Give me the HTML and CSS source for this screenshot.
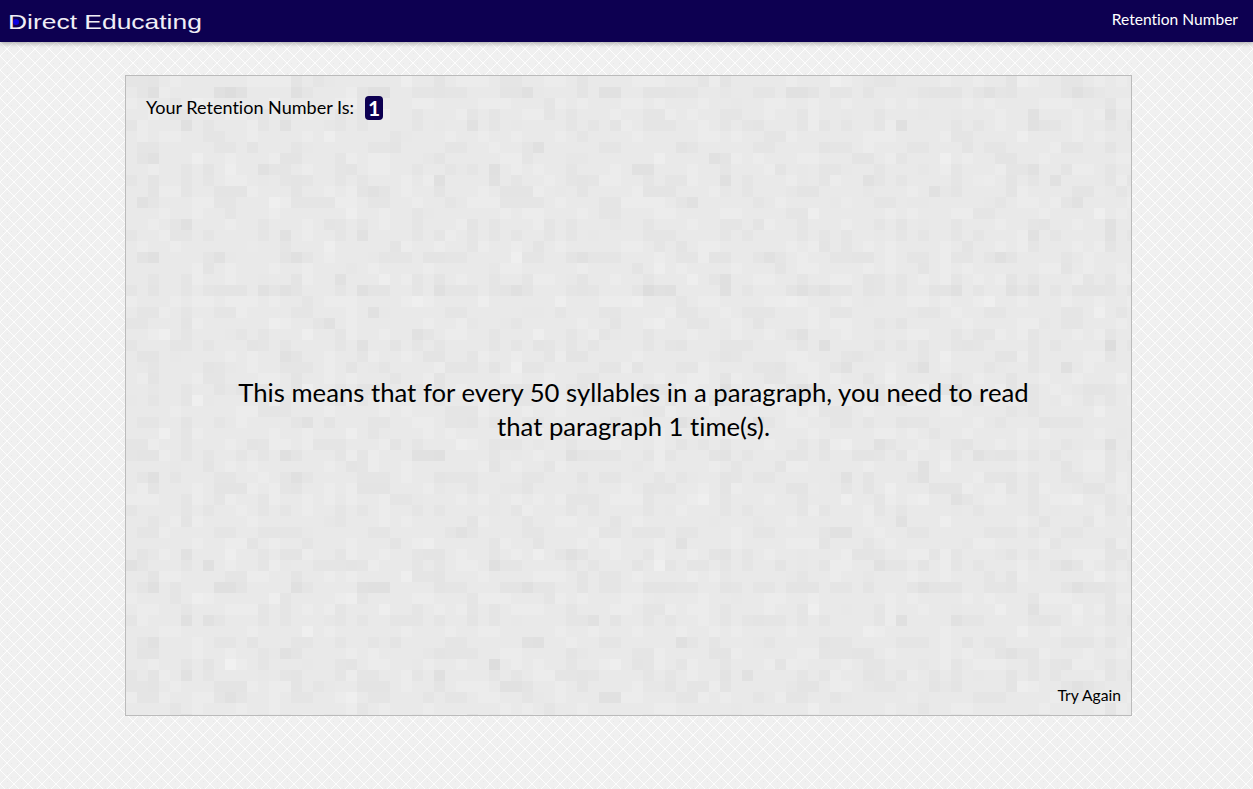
FILE: index.html
```html
<!DOCTYPE html>
<html lang="en">
<head>
<meta charset="utf-8">
<title>Retention Number</title>
<link rel="stylesheet" href="styles.css">
</head>
<body>
<header class="topbar">
  <a class="brand"><span class="brand-text">Direct Educating</span><i class="brand-dot"></i></a>
  <nav class="nav"><a>Retention Number</a></nav>
</header>
<main class="page">
  <section class="panel">
    <div class="score"><span class="score-label">Your Retention Number Is:</span><span class="badge">1</span></div>
    <p class="message">This means that for every 50 syllables in a paragraph, you need to read that paragraph 1 time(s).</p>
    <div class="actions"><a class="again">Try Again</a></div>
  </section>
</main>
</body>
</html>
```
FILE: styles.css
```css
* { box-sizing: border-box; }
html, body { height: 100%; }
body {
  margin: 0;
  font-family: "Lato", "Liberation Sans", sans-serif;
  font-variant-ligatures: none;
  color: #000;
  overflow: hidden;
  background-color: #f0f0f0;
  background-image: url("data:image/svg+xml,%3Csvg xmlns='http://www.w3.org/2000/svg' width='14' height='14' shape-rendering='crispEdges'%3E%3Cpath d='M0 0L14 14M14 0L0 14' stroke='%23fdfdfd' stroke-width='1' fill='none'/%3E%3Cpath d='M7 3h1v1H7zM3 7h1v1H3zM11 7h1v1h-1zM7 11h1v1H7z' fill='%23e9e9e9'/%3E%3C/svg%3E");
  display: flex;
  flex-direction: column;
}
.topbar {
  height: 42px;
  flex: none;
  background: #0d0051;
  box-shadow: 0 1px 5px rgba(0,0,0,.35);
  display: flex;
  justify-content: space-between;
  align-items: flex-start;
  padding: 0 15px 0 8px;
}
.brand { position: relative; display: block; height: 42px; }
.brand-text {
  display: block;
  font: 21px/44px "Liberation Sans", Arial, sans-serif;
  color: #f0eef6;
  transform: scaleX(1.258);
  transform-origin: left center;
  white-space: nowrap;
}
.brand-dot {
  position: absolute;
  left: 5px;
  top: 19px;
  width: 6px;
  height: 6px;
  border-radius: 50%;
  background: #0a00e0;
}
.nav { font-size: 15.55px; line-height: 39px; color: #fff; }
.page { flex: 1; padding: 33px 121px 0 125px; }
.panel {
  width: 1007px;
  height: 641px;
  border: 1px solid #bbb;
  background-color: #e9e9e9;
  background-image:
    url("data:image/svg+xml,%3Csvg xmlns='http://www.w3.org/2000/svg' width='77' height='55'%3E%3Cpath fill='%23000' fill-opacity='.015' d='M11 11h22v11H11zM55 33h11v22H55zM0 44h11v11H0z'/%3E%3Cpath fill='%23fff' fill-opacity='.13' d='M44 0h11v11H44zM22 33h11v11H22zM66 22h11v11H66z'/%3E%3C/svg%3E"),
    url("data:image/svg+xml,%3Csvg xmlns='http://www.w3.org/2000/svg' width='143' height='99'%3E%3Cpath fill='%23000' fill-opacity='.02' d='M22 0h11v22H22zM88 11h33v11H88zM55 44h11v11H55zM121 66h11v11h-11zM11 77h22v11H11zM77 88h11v11H77z'/%3E%3Cpath fill='%23fff' fill-opacity='.15' d='M0 22h11v11H0zM66 22h22v11H66zM110 33h11v11h-11zM33 55h11v11H33zM99 77h11v22H99zM132 0h11v11h-11z'/%3E%3C/svg%3E"),
    url("data:image/svg+xml,%3Csvg xmlns='http://www.w3.org/2000/svg' width='187' height='121'%3E%3Cpath fill='%23000' fill-opacity='.015' d='M0 0h22v11H0zM44 22h11v22H44zM99 11h22v11H99zM154 33h11v22h-11zM77 55h22v11H77zM22 77h11v11H22zM132 88h33v11h-33zM176 99h11v11h-11zM55 110h11v11H55z'/%3E%3Cpath fill='%23fff' fill-opacity='.12' d='M33 11h11v11H33zM143 0h22v11h-22zM11 44h11v22H11zM121 44h11v11h-11zM66 77h11v11H66zM176 66h11v11h-11zM99 99h22v11H99zM33 110h11v11H33z'/%3E%3C/svg%3E");
  padding: 20px 10px 8px 20px;
  display: flex;
  flex-direction: column;
}
.score { display: flex; align-items: center; height: 24px; font-size: 18.05px; line-height: 22px; }
.score-label { margin-right: 11px; position: relative; top: -1px; }
.badge {
  width: 18px;
  height: 24px;
  border-radius: 4px;
  background: #0d0051;
  color: #fff;
  font-weight: 700;
  font-size: 21px;
  line-height: 24px;
  text-align: center;
}
.message {
  flex: 1;
  margin: 0;
  padding: 11px 75px 0;
  display: flex;
  align-items: center;
  text-align: center;
  justify-content: center;
  font-size: 25.7px;
  line-height: 34px;
}
.actions { text-align: right; font-size: 15.7px; line-height: 20px; position: relative; top: -2px; }
```
